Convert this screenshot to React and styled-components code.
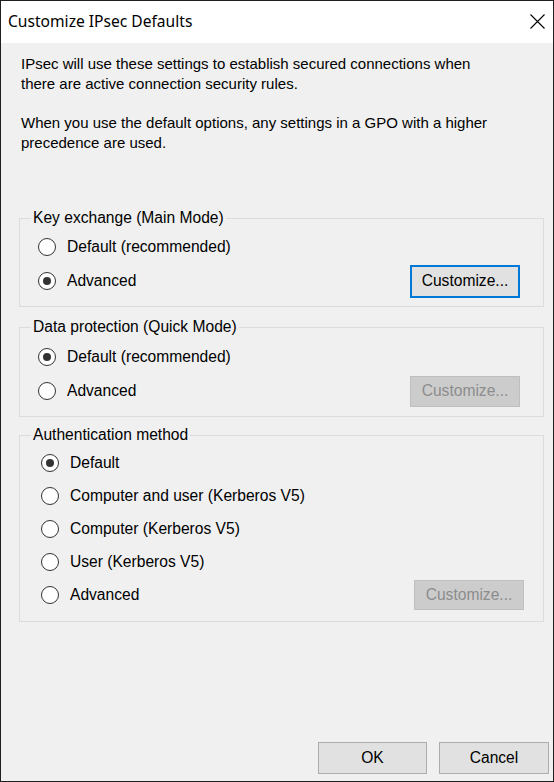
import React from "react";
import styled, { createGlobalStyle } from "styled-components";

const Global = createGlobalStyle`
  html, body { margin: 0; padding: 0; background: #f0f0f0; }
  body { font-family: "Liberation Sans", Arial, sans-serif; }
  * { box-sizing: border-box; }
`;

const Window = styled.div`
  width: 554px;
  height: 782px;
  border: 1px solid #1f1f1f;
  background: #f0f0f0;
  display: flex;
  flex-direction: column;
  color: #000;
  font-family: "Liberation Sans", Arial, sans-serif;
  font-size: 15px;
`;

const TitleBar = styled.div`
  height: 42px;
  background: #ffffff;
  display: flex;
  align-items: center;
  justify-content: space-between;
  padding: 0 7px 2px 7px;
  flex-shrink: 0;
`;

const Title = styled.div`
  font-family: "Noto Sans", "Open Sans", sans-serif;
  font-size: 15.6px;
  color: #000;
`;

const CloseIcon = styled.svg`
  width: 15px;
  height: 15px;
  margin-right: 1px;
`;

const Body = styled.div`
  flex: 1;
  display: flex;
  flex-direction: column;
  padding: 11px 9px 7px 18px;
`;

const Para = styled.p`
  margin: 0 0 19px 2px;
  line-height: 20px;
  color: #000;
`;

const Group = styled.fieldset`
  margin: ${(p) => p.$mt}px 0 0 0;
  padding: 0 0 ${(p) => p.$pb}px 0;
  border: 1px solid #dcdcdc;
  min-width: 0;
`;

const Legend = styled.legend`
  margin-left: 11px;
  padding: 0 2px 0 2px;
  line-height: 18px;
  font-size: 15.6px;
`;

const Rows = styled.div`
  display: flex;
  flex-direction: column;
  padding-top: ${(p) => p.$pt}px;
`;

const Row = styled.div`
  height: ${(p) => p.$h}px;
  display: flex;
  align-items: center;
  padding-left: ${(p) => p.$indent}px;
  padding-right: ${(p) => p.$right}px;
`;

const Circle = styled.span`
  width: 18px;
  height: 18px;
  border-radius: 50%;
  border: 1px solid #333;
  background: #fff;
  display: flex;
  align-items: center;
  justify-content: center;
  flex-shrink: 0;
  &::after {
    content: "";
    width: 8px;
    height: 8px;
    border-radius: 50%;
    background: ${(p) => (p.$checked ? "#333" : "transparent")};
  }
`;

const Label = styled.span`
  margin-left: 11px;
  color: #000;
  font-size: 15.6px;
  flex: 1;
`;

const Button = styled.button`
  font-family: "Liberation Sans", Arial, sans-serif;
  font-size: 15.6px;
  width: ${(p) => p.$w || 110}px;
  height: ${(p) => p.$h || 31}px;
  padding: 0;
  background: ${(p) => (p.$disabled ? "#cccccc" : "#e1e1e1")};
  color: ${(p) => (p.$disabled ? "#8d8d8d" : "#000")};
  border: ${(p) =>
    p.$focus ? "2px solid #0078d7" : p.$disabled ? "1px solid #bfbfbf" : "1px solid #adadad"};
  flex-shrink: 0;
`;

const Footer = styled.div`
  margin-top: auto;
  display: flex;
  justify-content: flex-end;
  gap: 12px;
  margin-right: -5px;
`;

const Radio = ({ checked, children, h, indent, right, button }) => (
  <Row $h={h} $indent={indent} $right={right}>
    <Circle $checked={checked} />
    <Label>{children}</Label>
    {button}
  </Row>
);

export default function App() {
  return (
    <>
      <Global />
      <Window>
        <TitleBar>
          <Title>Customize IPsec Defaults</Title>
          <CloseIcon viewBox="0 0 15 15">
            <path d="M0.5 0.5 L14.5 14.5 M14.5 0.5 L0.5 14.5" stroke="#000" strokeWidth="1.1" fill="none" />
          </CloseIcon>
        </TitleBar>
        <Body>
          <Para>
            IPsec will use these settings to establish secured connections when
            <br />
            there are active connection security rules.
          </Para>
          <Para>
            When you use the default options, any settings in a GPO with a higher
            <br />
            precedence are used.
          </Para>

          <Group $mt={37} $pb={8}>
            <Legend>Key exchange (Main Mode)</Legend>
            <Rows $pt={3}>
              <Radio h={34} indent={18} right={23}>Default (recommended)</Radio>
              <Radio
                h={34}
                indent={18}
                right={23}
                checked
                button={<Button $focus $h={33}>Customize...</Button>}
              >
                Advanced
              </Radio>
            </Rows>
          </Group>

          <Group $mt={11} $pb={8}>
            <Legend>Data protection (Quick Mode)</Legend>
            <Rows $pt={4}>
              <Radio h={34} indent={18} right={23} checked>Default (recommended)</Radio>
              <Radio
                h={34}
                indent={18}
                right={23}
                button={<Button $disabled>Customize...</Button>}
              >
                Advanced
              </Radio>
            </Rows>
          </Group>

          <Group $mt={9} $pb={10}>
            <Legend>Authentication method</Legend>
            <Rows $pt={2}>
              <Radio h={33} indent={21} right={19} checked>Default</Radio>
              <Radio h={33} indent={21} right={19}>Computer and user (Kerberos V5)</Radio>
              <Radio h={33} indent={21} right={19}>Computer (Kerberos V5)</Radio>
              <Radio h={33} indent={21} right={19}>User (Kerberos V5)</Radio>
              <Radio
                h={33}
                indent={21}
                right={19}
                button={<Button $disabled $h={30}>Customize...</Button>}
              >
                Advanced
              </Radio>
            </Rows>
          </Group>

          <Footer>
            <Button $w={109} $h={32}>OK</Button>
            <Button $w={110} $h={32}>Cancel</Button>
          </Footer>
        </Body>
      </Window>
    </>
  );
}
